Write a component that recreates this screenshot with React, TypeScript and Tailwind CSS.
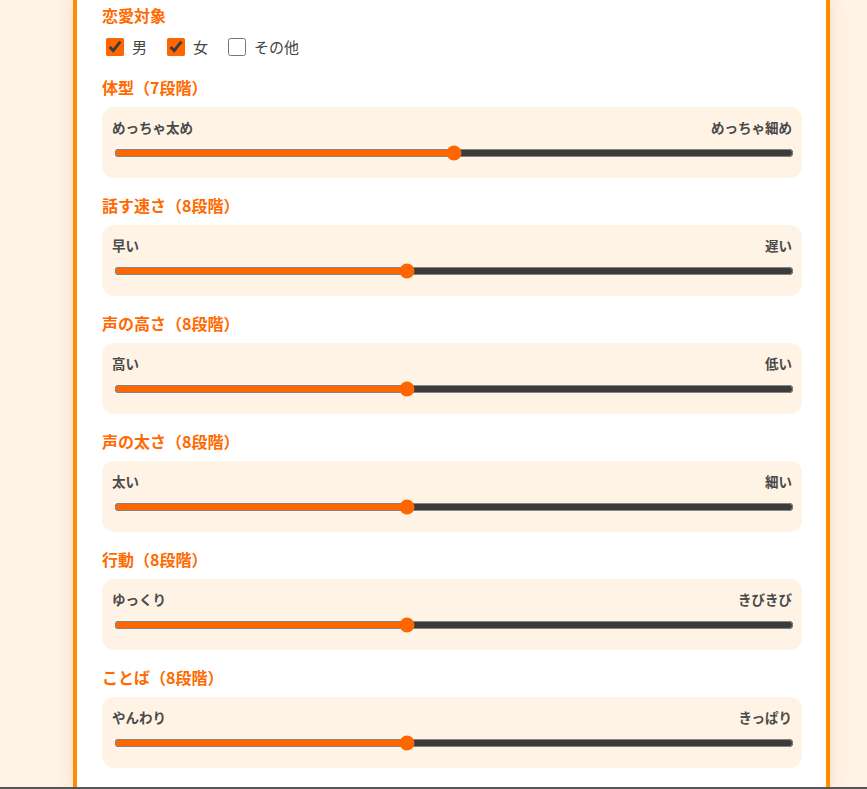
import { useState } from "react";

const sliders = [
  { title: "体型（7段階）", left: "めっちゃ太め", right: "めっちゃ細め", max: 6, value: 3 },
  { title: "話す速さ（8段階）", left: "早い", right: "遅い", max: 7, value: 3 },
  { title: "声の高さ（8段階）", left: "高い", right: "低い", max: 7, value: 3 },
  { title: "声の太さ（8段階）", left: "太い", right: "細い", max: 7, value: 3 },
  { title: "行動（8段階）", left: "ゆっくり", right: "きびきび", max: 7, value: 3 },
  { title: "ことば（8段階）", left: "やんわり", right: "きっぱり", max: 7, value: 3 },
];

function SliderBlock({ item }: { item: (typeof sliders)[number] }) {
  const [v, setV] = useState(item.value);
  return (
    <div className="mb-[18px]">
      <h3 className="h-[20px] leading-[18px] text-[16px] font-bold text-[#ff6a00] mb-[9px]">
        {item.title}
      </h3>
      <div className="h-[71px] rounded-xl bg-[#fff3e5] px-[10px] pt-[11px]">
        <div className="flex justify-between h-[18px] leading-[18px] text-[13.5px] font-bold text-[#4a4a4a]">
          <span>{item.left}</span>
          <span>{item.right}</span>
        </div>
        <input
          type="range"
          min={0}
          max={item.max}
          value={v}
          onChange={(e) => setV(Number(e.target.value))}
          className="block ml-[2px] mt-[9px] h-4 w-full accent-[#ff6600]"
        />
      </div>
    </div>
  );
}

export default function App() {
  const [love, setLove] = useState({ male: true, female: true, other: false });
  return (
    <div
      className="h-[789px] overflow-hidden bg-[#fff3e6] flex flex-col"
      style={{ fontFamily: '"Noto Sans CJK JP", "Noto Sans", sans-serif' }}
    >
      <div className="flex-1 min-h-0">
        <div className="ml-[73px] w-[757px] h-full border-x-4 border-[#ff8c00] bg-white pl-[25px] pr-[24px] pt-[6px] shadow-[0_0_14px_rgba(190,140,80,0.25)]">
          {/* 恋愛対象 */}
          <h3 className="h-[20px] leading-[18px] text-[16px] font-bold text-[#ff6a00]">
            恋愛対象
          </h3>
          <div className="flex items-center gap-[20px] mt-[12px] h-[18px] pl-[4px] text-[15px] text-[#444]">
            {(
              [
                ["male", "男"],
                ["female", "女"],
                ["other", "その他"],
              ] as const
            ).map(([k, label]) => (
              <label key={k} className="flex items-center gap-[8px]">
                <input
                  type="checkbox"
                  checked={love[k]}
                  onChange={(e) => setLove({ ...love, [k]: e.target.checked })}
                  className="w-[18px] h-[18px] accent-[#ff6600]"
                />
                <span>{label}</span>
              </label>
            ))}
          </div>
          <div className="mt-[22px]">
            {sliders.map((s) => (
              <SliderBlock key={s.title} item={s} />
            ))}
          </div>
        </div>
      </div>
      <div className="h-[2px] bg-[#555]" />
    </div>
  );
}
